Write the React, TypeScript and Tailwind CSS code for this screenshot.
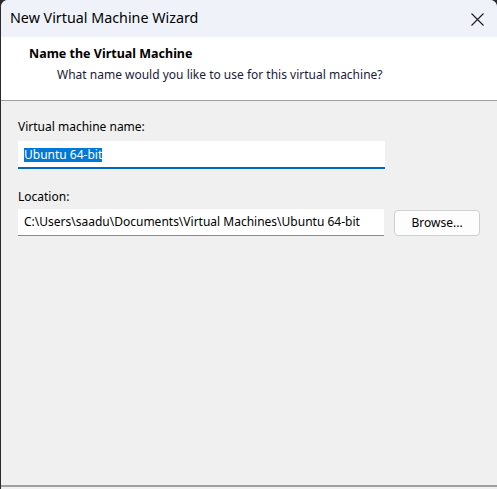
export default function App() {
  return (
    <div className="h-[489px] w-[497px] overflow-hidden bg-[#2b2b2b] pl-px">
      <div className="flex h-full flex-col overflow-hidden rounded-tl-[7px] rounded-tr-[7px] bg-[#f0f0f0] font-['Noto_Sans',sans-serif] text-black">
        {/* Title bar */}
        <div className="flex h-[37px] shrink-0 items-center justify-between bg-[#eff3f9] pl-[9px] pr-[13px]">
          <span className="text-[14.3px] leading-none">New Virtual Machine Wizard</span>
          <svg width="13" height="13" viewBox="0 0 13 13" className="mt-[1px]">
            <path d="M0.5 0.5 L12.5 12.5 M12.5 0.5 L0.5 12.5" stroke="#1a1a1a" strokeWidth="1.1" />
          </svg>
        </div>

        {/* Header */}
        <div className="h-[64px] shrink-0 border-b border-[#a0a0a0] bg-white pt-[9px]">
          <div className="pl-[28px] text-[12.5px] font-bold leading-[16px]">Name the Virtual Machine</div>
          <div className="pl-[56px] pt-[5px] text-[12px] leading-[16px] text-[#1a1a3a]">
            What name would you like to use for this virtual machine?
          </div>
        </div>

        {/* Body */}
        <div className="flex flex-1 flex-col px-[17px] pt-[18px]">
          <label className="text-[12px] leading-[16px]">Virtual machine name:</label>
          <div className="mt-[6px] flex h-[28px] w-[367px] items-center border-b-[2px] border-[#0067c0] bg-white pl-[6px] pt-[1px]">
            <span className="bg-[#0078d7] text-[12px] leading-[14px] text-white">Ubuntu 64-bit</span>
          </div>

          <label className="mt-[20px] text-[12px] leading-[16px]">Location:</label>
          <div className="mt-[4px] flex items-center gap-[10px]">
            <div className="flex h-[27px] w-[367px] items-center border-b border-[#8a8a8a] bg-white pl-[6px] text-[12px]">
              C:\Users\saadu\Documents\Virtual Machines\Ubuntu 64-bit
            </div>
            <button className="h-[26px] w-[86px] rounded-[4px] border border-[#d0d0d0] bg-[#fdfdfd] text-[12px]">
              Browse...
            </button>
          </div>
        </div>

        {/* Footer separator */}
        <div className="h-[4px] shrink-0 border-t-2 border-[#a0a0a0] bg-[#f0f0f0]" />
      </div>
    </div>
  );
}
